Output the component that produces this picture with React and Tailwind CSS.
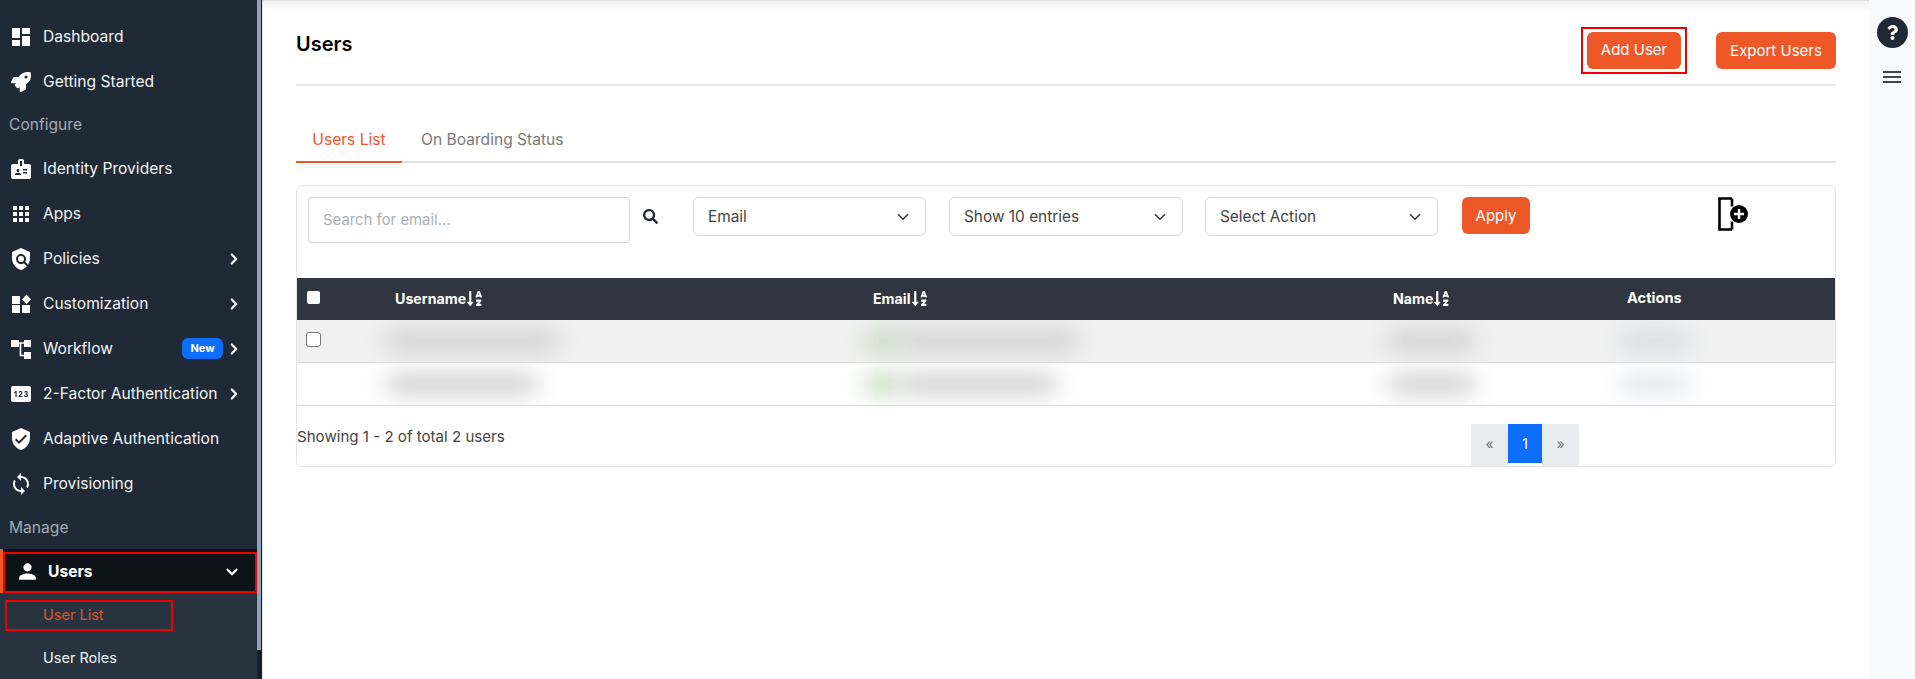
import React from "react";
import { ChevronDown, ChevronRight } from "lucide-react";
import { FaQuestion, FaRocket, FaSearch, FaSortAlphaDown } from "react-icons/fa";
import {
   MdApps,
   MdBadge,
   MdDashboard,
   MdPerson,
   MdPin,
   MdPolicy,
   MdSync,
   MdVerifiedUser,
} from "react-icons/md";

const WorkflowIcon = ({ className }) => (
   <svg viewBox="0 0 24 24" className={className} fill="#fff">
      <rect x="2" y="3" width="8" height="7" />
      <rect x="15" y="3" width="7" height="7" />
      <rect x="15" y="15" width="7" height="7" />
      <path d="M10 6h5M11.5 6v12.5H15" fill="none" stroke="#fff" strokeWidth="1.6" />
   </svg>
);

const CustomizeIcon = ({ className }) => (
   <svg viewBox="0 0 24 24" className={className} fill="#fff">
      <rect x="3" y="4" width="8" height="8" />
      <rect x="3" y="13" width="8" height="8" />
      <rect x="13" y="13" width="8" height="8" />
      <path d="M17.5 2.5 22 7.5 17.5 12 13 7.5z" />
   </svg>
);

const RocketIcon = ({ className }) => (
   <span className={`${className} flex items-center justify-center`}>
      <FaRocket className="h-5 w-5" />
   </span>
);

const NavItem = ({ icon: Icon, label, arrow, badge }) => (
   <div className="flex h-[45px] items-center pl-[9px] pr-[19px] text-[15.6px] text-[#f1f3f5]">
      <Icon className="h-6 w-6 shrink-0 text-white" />
      <span className="ml-[10px] whitespace-nowrap">{label}</span>
      {badge && (
         <span className="ml-auto flex h-[21px] w-[41px] items-center justify-center rounded-md bg-[#0d6efd] text-[11px] font-bold text-white">
            {badge}
         </span>
      )}
      {arrow && (
         <ChevronRight
            strokeWidth={3}
            className={`h-[18px] w-[18px] shrink-0 text-white ${badge ? "ml-[2px]" : "ml-auto"}`}
         />
      )}
   </div>
);

const NavLabel = ({ children, className }) => (
   <div className={`flex items-center pl-[9px] text-[15.6px] text-[#a3abb3] ${className}`}>
      {children}
   </div>
);

const Sidebar = () => (
   <aside className="relative h-full w-[263px] shrink-0 overflow-hidden border-r border-[#dfe3e8] bg-[#1f2a36]">
      <div className="pt-[14px]">
         <NavItem icon={MdDashboard} label="Dashboard" />
         <NavItem icon={RocketIcon} label="Getting Started" />
         <NavLabel className="h-[42px]">Configure</NavLabel>
         <NavItem icon={MdBadge} label="Identity Providers" />
         <NavItem icon={MdApps} label="Apps" />
         <NavItem icon={MdPolicy} label="Policies" arrow />
         <NavItem icon={CustomizeIcon} label="Customization" arrow />
         <NavItem icon={WorkflowIcon} label="Workflow" arrow badge="New" />
         <NavItem icon={MdPin} label="2-Factor Authentication" arrow />
         <NavItem icon={MdVerifiedUser} label="Adaptive Authentication" />
         <NavItem icon={MdSync} label="Provisioning" />
         <NavLabel className="h-[43px]">Manage</NavLabel>

         <div className="h-[44px] w-[257px] border-l-[3px] border-[#ee5728] bg-[#0b1218] pt-[3px]">
            <div className="flex h-[41px] items-center border-2 border-[#f00000] pb-[2px] pl-[10px] pr-[14px]">
               <MdPerson className="h-[25px] w-[25px] text-white" />
               <span className="ml-[8px] text-[15.6px] font-bold text-white">Users</span>
               <ChevronDown strokeWidth={3} className="ml-auto h-[18px] w-[18px] text-white" />
            </div>
         </div>

         <div className="h-[100px] w-[257px] bg-[#27333f] pt-[7px] text-[14.5px]">
            <div className="ml-[5px] flex h-[31px] w-[168px] items-center border-2 border-[#f00000] pb-[2px] pl-[36px] text-[#e2532c]">
               User List
            </div>
            <div className="flex h-[54px] items-center pl-[43px] text-[#f1f3f5]">User Roles</div>
         </div>
      </div>

      {/* sidebar scrollbar */}
      <div className="absolute right-0 top-0 h-full w-[5px] bg-[#161f28]">
         <div className="h-[650px] w-[4px] bg-[#8fa3b8]" />
      </div>
   </aside>
);

const SelectBox = ({ label, className }) => (
   <div
      className={`flex h-[39px] items-center justify-between rounded-md border border-[#d8d8d8] pl-[14px] pr-[13px] text-[15.4px] text-[#444] ${className}`}
   >
      <span>{label}</span>
      <ChevronDown strokeWidth={2} className="h-[18px] w-[18px] text-[#333]" />
   </div>
);

const SortLabel = ({ children }) => (
   <span className="flex items-center text-[14.2px] font-bold text-white">
      {children}
      <FaSortAlphaDown className="h-[17px] w-[17px]" />
   </span>
);

// stands in for the hidden cell text
const Blurred = ({ width, color = "bg-[#cfcfcf]" }) => (
   <div className={`h-[20px] rounded-sm blur-[11px] ${color}`} style={{ width }} />
);

const UserRow = ({ shaded, widths, check }) => (
   <div
      className={`grid h-[43px] grid-cols-[98px_478px_520px_234px_1fr] items-center overflow-hidden border-b border-[#d9d9d9] ${
         shaded ? "bg-[#f1f1f1]" : "bg-white"
      }`}
   >
      <div className="pl-[9px]">
         {check && (
            <div className="mb-[4px] h-[15px] w-[15px] rounded-[3px] border border-[#777] bg-white" />
         )}
      </div>
      <div className="-ml-[8px]">
         <Blurred width={widths[0]} />
      </div>
      <div className="-ml-[8px] flex items-center">
         <Blurred width={36} color="bg-[#c3dcbc]" />
         <Blurred width={widths[1]} />
      </div>
      <div className="-ml-[4px]">
         <Blurred width={widths[2]} />
      </div>
      <div className="-ml-[6px]">
         <Blurred width={68} color={shaded ? "bg-[#d5dce4]" : "bg-[#dfe7f0]"} />
      </div>
   </div>
);

const UsersTable = () => (
   <div>
      <div className="grid h-[42px] grid-cols-[98px_478px_520px_234px_1fr] items-center bg-[#2f363f]">
         <div className="pl-[10px]">
            <div className="mb-[3px] h-[13px] w-[13px] rounded-[2px] bg-white" />
         </div>
         <SortLabel>Username</SortLabel>
         <SortLabel>Email</SortLabel>
         <SortLabel>Name</SortLabel>
         <span className="text-[14.6px] font-bold text-white">Actions</span>
      </div>
      <UserRow shaded check widths={[170, 175, 85]} />
      <UserRow widths={[150, 155, 85]} />
   </div>
);

const ImportIcon = () => (
   <svg viewBox="0 0 30 34" className="ml-[188px] h-[34px] w-[30px]">
      <path d="M14 1.5H1.5v31H14" fill="none" stroke="#000" strokeWidth="2.6" />
      <path d="M14 1.5v8M14 24.5v8" fill="none" stroke="#000" strokeWidth="2.6" />
      <circle cx="21" cy="17" r="9" fill="#000" />
      <path d="M21 12v10M16 17h10" stroke="#fff" strokeWidth="2.4" />
   </svg>
);

const App = () => (
   <div
      className="flex h-screen overflow-hidden bg-white"
      style={{ fontFamily: "Inter, 'Noto Sans', sans-serif" }}
   >
      <Sidebar />

      <main className="flex min-w-0 flex-1 flex-col">
         <div className="h-[12px] border-t border-[#dedede] bg-gradient-to-b from-[#f1f1f1] to-white" />

         <div className="px-[33px]">
            <div className="flex h-[74px] items-start justify-between border-b-2 border-[#e9e9e9] pt-[15px]">
               <h1 className="mt-[3px] text-[20px] font-semibold leading-7 text-black">Users</h1>
               <div className="flex items-start">
                  <div className="border-2 border-[#f00000] px-[4px] py-[3px]">
                     <button className="h-[37px] w-[94px] rounded-md bg-[#ee5728] text-[15px] text-white">
                        Add User
                     </button>
                  </div>
                  <button className="ml-[29px] mt-[5px] h-[37px] w-[120px] rounded-md bg-[#ee5728] pt-[1px] text-[15px] text-white">
                     Export Users
                  </button>
               </div>
            </div>

            <div className="mt-[37px] flex h-[40px] border-b-2 border-[#e0e0e0] pb-[4px] text-[15.6px]">
               <div className="-mb-[6px] flex w-[106px] items-center justify-center border-b-2 border-[#ee5728] pb-[4px] text-[#ee5728]">
                  Users List
               </div>
               <div className="flex items-center pl-[19px] text-[#7a7a7a]">On Boarding Status</div>
            </div>

            <div className="mt-[22px] h-[282px] rounded-md border border-[#e4e4e4]">
               <div className="flex h-[92px] items-start pl-[11px] pt-[11px]">
                  <input
                     type="text"
                     placeholder="Search for email..."
                     className="h-[46px] w-[322px] rounded-sm border border-[#d4d4d4] px-[14px] text-[14.9px] outline-none placeholder:text-[#a9b0b6]"
                  />
                  <FaSearch className="ml-[13px] mt-[12px] h-[15px] w-[15px] text-[#212b36]" />
                  <SelectBox label="Email" className="ml-[35px] w-[233px]" />
                  <SelectBox label="Show 10 entries" className="ml-[23px] w-[234px]" />
                  <SelectBox label="Select Action" className="ml-[22px] w-[233px]" />
                  <button className="ml-[24px] h-[37px] w-[68px] rounded-md bg-[#ee5728] pt-[1px] text-[15px] text-white">
                     Apply
                  </button>
                  <ImportIcon />
               </div>

               <UsersTable />

               <div className="flex h-[60px] items-start justify-between pr-[256px]">
                  <span className="mt-[20px] text-[15.1px] text-[#444]">Showing 1 - 2 of total 2 users</span>
                  <div className="mt-[18px] flex h-[42px] text-[14px]">
                     <span className="flex w-[37px] items-center justify-center bg-[#e9ecef] pb-[3px] text-[#6c757d]">«</span>
                     <span className="flex h-[39px] w-[34px] items-center justify-center bg-[#0d6efd] text-white">1</span>
                     <span className="flex w-[37px] items-center justify-center bg-[#e9ecef] pb-[3px] text-[#6c757d]">»</span>
                  </div>
               </div>
            </div>
         </div>
      </main>

      <div className="flex h-full w-[46px] shrink-0 flex-col items-center bg-[#f8f9fa] pt-[17px]">
         <div className="flex h-[31px] w-[31px] items-center justify-center rounded-full bg-[#1f2a36]">
            <FaQuestion className="h-[15px] w-[15px] text-white" />
         </div>
         <div className="mt-[23px] flex w-[18px] flex-col gap-[3px]">
            <div className="h-[2px] bg-[#444]" />
            <div className="h-[2px] bg-[#444]" />
            <div className="h-[2px] bg-[#444]" />
         </div>
      </div>
   </div>
);

export default App;
